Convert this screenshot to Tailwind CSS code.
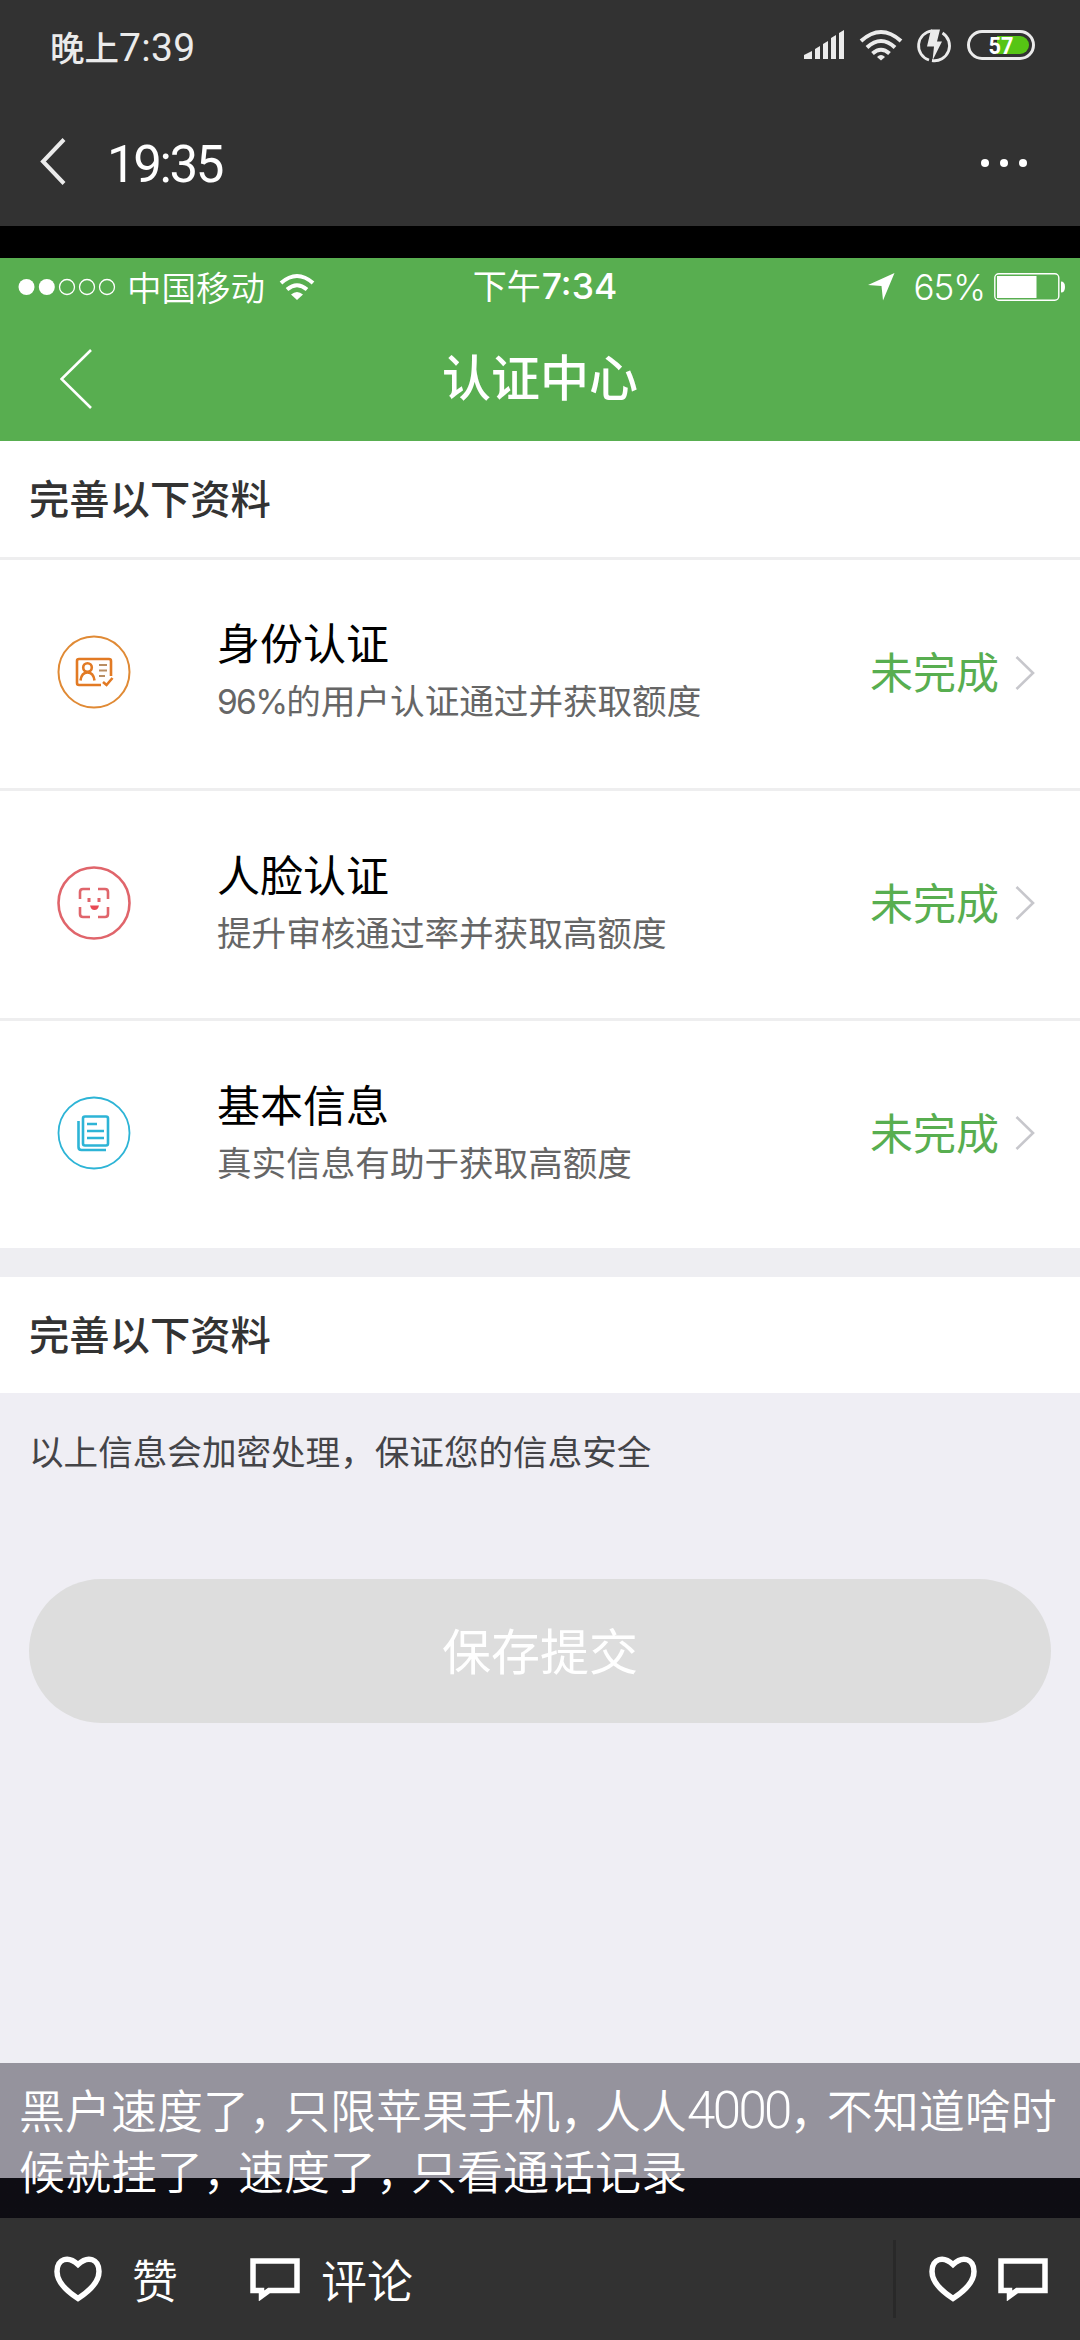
<!DOCTYPE html>
<html lang="zh-CN">
<head>
<meta charset="utf-8">
<title>认证中心</title>
<script src="https://cdn.jsdelivr.net/npm/@tailwindcss/browser@4"></script>
</head>
<body class="w-[1080px] h-[2340px] overflow-hidden bg-black flex flex-col font-['Noto_Sans_CJK_SC',sans-serif]">

<!-- phone status bar -->
<div class="h-[94px] shrink-0 bg-[#323232] flex items-start pl-[50px] pr-[45px] text-[#ebebeb]">
  <div class="flex items-baseline h-[94px] pt-[22px] whitespace-nowrap leading-[48px]"><span class="text-[34.500px] font-medium">晚上</span><span class="font-[Roboto] text-[39px] tracking-[0.300px]">7:39</span></div>
  <div class="ml-auto mt-[29px] flex">
    <svg class="w-[231px] h-[34px]" viewBox="804 29 231 34" fill="#ebebeb">
      <path d="M804 59v-4l8-4v8h-8zM815 59V49l5-3v13zM823 59V44l5-3v18zM831 59V38l5-3v24zM839 59V33l5-3v29z"/>
      <g fill="none" stroke="#ebebeb" stroke-width="4"><path d="M861 41Q881 23 901 41M867 47.500Q881 34.500 895 47.500M872.500 53.500Q881 46 889.500 53.500"/></g>
      <path d="M877 57q4-4 8 0l-4 3.500z"/>
      <path d="M932 30.800A15 15 0 0 0 929 60M942.500 33A15 15 0 0 1 932 60.500" fill="none" stroke="#ebebeb" stroke-width="2.800"/>
      <path d="M931 29.500h9l-3 12h5L932.500 60.500l1.500-14h-7z"/>
      <rect x="968.500" y="31.500" width="65" height="27" rx="13.500" fill="none" stroke="#ebebeb" stroke-width="3"/>
      <path d="M997 36h23a9 9 0 0 1 0 18h-23z" fill="#56c514"/>
      <text x="1001" y="54" text-anchor="middle" font-family="Roboto" font-weight="700" font-size="24" textLength="25" lengthAdjust="spacingAndGlyphs" fill="#fff">57</text>
    </svg>
  </div>
</div>

<!-- viewer toolbar -->
<div class="h-[132px] shrink-0 bg-[#323232] flex pl-[40px] pr-[53px] text-white">
  <svg class="w-[26px] h-[48px] mt-[43px]" viewBox="0 0 26 48" fill="none" stroke="#ebebeb" stroke-width="4"><path d="M24 2.500L3 24.500 24 46.500"/></svg>
  <div class="ml-[41px] mt-[41px] font-[Roboto] text-[51px] leading-[60px] tracking-[-2.400px]">19:35</div>
  <div class="ml-auto mt-[65px] flex gap-[11px]"><i class="size-2 rounded-full bg-white"></i><i class="size-2 rounded-full bg-white"></i><i class="size-2 rounded-full bg-white"></i></div>
</div>

<div class="h-8 shrink-0 bg-black"></div>

<!-- green header -->
<div class="h-[183px] shrink-0 bg-[#58ae50] text-white">
  <div class="h-[58px] grid grid-cols-3 items-center pl-[18px] pr-[14px]">
    <div class="flex items-center whitespace-nowrap">
      <svg class="w-[98px] h-[18px]" viewBox="0 0 98 18" fill="#fff"><circle cx="8.500" cy="9" r="8"/><circle cx="28.800" cy="9" r="8"/><g fill="none" stroke="#fff" stroke-width="1.300"><circle cx="49" cy="9" r="7.500"/><circle cx="69" cy="9" r="7.500"/><circle cx="89" cy="9" r="7.500"/></g></svg>
      <span class="ml-[11px] text-[34.500px] leading-[48px] pb-[3px] font-[350]">中国移动</span>
      <svg class="ml-[14px] w-[36px] h-[28px]" viewBox="0 0 36 28" fill="none" stroke="#fff" stroke-width="4"><path d="M2 10Q18-4 34 10M8 16.500Q18 8 28 16.500"/><path d="M12 21.500q6-5 12 0L18 27z" fill="#fff" stroke="none"/></svg>
    </div>
    <div class="flex justify-center items-baseline whitespace-nowrap leading-[48px] pl-[6px] pb-[2px]"><span class="text-[34px]">下午</span><span class="ml-[1px] font-[Inter] font-medium text-[35.500px]">7:34</span></div>
    <div class="flex items-center justify-end">
      <svg class="w-[27px] h-[28px]" viewBox="0 0 27 28" fill="#fff"><path d="M26.500 0L15 27.500 13.500 13 0 12z"/></svg>
      <span class="ml-[18px] font-[Inter] font-light text-[35px] leading-[48px] tracking-[-1px]">65%</span>
      <svg class="ml-[9px] w-[72px] h-[28px]" viewBox="0 0 72 28"><rect x=".8" y=".8" width="64" height="26.400" rx="4" fill="none" stroke="#fff" stroke-width="1.400"/><path d="M3 3h39.500v22H3z" fill="#fff"/><path d="M67 8.500q4 0 4 5.500t-4 5.500z" fill="#fff"/></svg>
    </div>
  </div>
  <div class="h-[125px] grid grid-cols-3 pl-[60px] pr-[60px]">
    <svg class="w-[32px] h-[60px] mt-[33px]" viewBox="0 0 32 60" fill="none" stroke="#fff" stroke-width="2.600"><path d="M31 1L1.500 30 31 59"/></svg>
    <div class="text-center text-[49px] font-medium leading-[70px] mt-[24px] whitespace-nowrap">认证中心</div>
  </div>
</div>

<div class="h-[116px] shrink-0 bg-white pl-[29px] text-[40.300px] leading-[112px] text-[#333] font-medium">完善以下资料</div>
<div class="h-[3px] shrink-0 bg-[#eeeeef]"></div>

<!-- identity -->
<div class="h-[228px] shrink-0 bg-white flex items-center pl-[57px] pr-[45px]">
  <svg class="size-[74px] -mt-[4px]" viewBox="0 0 74 74" fill="none" stroke="#e08a35" stroke-width="2"><circle cx="37" cy="37" r="35.500"/><g stroke="#e27a24" stroke-width="2.600"><path d="M44 50H22a2 2 0 0 1-2-2V26a2 2 0 0 1 2-2h30a2 2 0 0 1 2 2v15"/><circle cx="30.500" cy="32.500" r="4.300"/><path d="M23.500 45.500q1-8 7-8t7 8M46 47l3.500 3 6-7"/></g><path d="M42 30h8M42 35.500h8M42 41h6" stroke="#b98e63"/></svg>
  <div class="ml-[86px] mt-[-8px] flex flex-col whitespace-nowrap">
    <div class="text-[43px] leading-[60px] text-black">身份认证</div>
    <div class="text-[34.600px] leading-[56px] text-[#666]"><span class="font-[Inter] text-[33.500px] tracking-[-1.700px]">96%</span>的用户认证通过并获取额度</div>
  </div>
  <div class="ml-auto mt-[-8px] text-[43px] leading-[60px] text-[#58ae50]">未完成</div>
  <svg class="ml-[16px] -mt-[3px] w-[20px] h-[36px]" viewBox="0 0 20 36" fill="none" stroke="#c7c7cc" stroke-width="2.600"><path d="M1.500 2L18 18 1.500 34"/></svg>
</div>
<div class="h-[3px] shrink-0 bg-[#eeeeef]"></div>

<!-- face -->
<div class="h-[227px] shrink-0 bg-white flex items-center pl-[57px] pr-[45px]">
  <svg class="size-[74px] -mt-[4px]" viewBox="0 0 74 74" fill="none" stroke="#e0656b" stroke-width="2.600"><circle cx="37" cy="37" r="35.500"/><path d="M23 33v-7q0-3 3-3h7M41 23h7q3 0 3 3v7M51 41v7q0 3-3 3h-7M33 51h-7q-3 0-3-3v-7"/><path d="M33 39.500h9q-1 4.500-4.500 4.500T33 39.500z" fill="#e84a55" stroke="none"/><path d="M32 32v4M42 32v4" stroke-width="3"/></svg>
  <div class="ml-[86px] mt-[-8px] flex flex-col whitespace-nowrap">
    <div class="text-[43px] leading-[60px] text-black">人脸认证</div>
    <div class="text-[34.600px] leading-[56px] text-[#666]">提升审核通过率并获取高额度</div>
  </div>
  <div class="ml-auto mt-[-8px] text-[43px] leading-[60px] text-[#58ae50]">未完成</div>
  <svg class="ml-[16px] -mt-[3px] w-[20px] h-[36px]" viewBox="0 0 20 36" fill="none" stroke="#c7c7cc" stroke-width="2.600"><path d="M1.500 2L18 18 1.500 34"/></svg>
</div>
<div class="h-[3px] shrink-0 bg-[#eeeeef]"></div>

<!-- basic info -->
<div class="h-[227px] shrink-0 bg-white flex items-center pl-[57px] pr-[45px]">
  <svg class="size-[74px] -mt-[4px]" viewBox="0 0 74 74" fill="none" stroke="#2db4d6" stroke-width="2.600"><circle cx="37" cy="37" r="35.500" stroke-width="1.800"/><rect x="26" y="20.500" width="25" height="29" rx="2"/><path d="M21.500 25v26q0 3 3 3H49"/><path d="M30 28h10M30 35h17M30 42h17"/></svg>
  <div class="ml-[86px] mt-[-8px] flex flex-col whitespace-nowrap">
    <div class="text-[43px] leading-[60px] text-black">基本信息</div>
    <div class="text-[34.600px] leading-[56px] text-[#666]">真实信息有助于获取高额度</div>
  </div>
  <div class="ml-auto mt-[-8px] text-[43px] leading-[60px] text-[#58ae50]">未完成</div>
  <svg class="ml-[16px] -mt-[3px] w-[20px] h-[36px]" viewBox="0 0 20 36" fill="none" stroke="#c7c7cc" stroke-width="2.600"><path d="M1.500 2L18 18 1.500 34"/></svg>
</div>
<div class="h-[29px] shrink-0 bg-[#eeeef2]"></div>
<div class="h-[116px] shrink-0 bg-white pl-[29px] text-[40.300px] leading-[112px] text-[#333] font-medium">完善以下资料</div>

<div class="h-[670px] shrink-0 bg-[#efeef4] px-[29px]">
  <div class="pt-[31px] text-[34.600px] leading-[52px] text-[#444448] whitespace-nowrap">以上信息会加密处理，保证您的信息安全</div>
  <div class="mt-[103px] h-[144px] rounded-full bg-[#dddddd] text-white text-[49px] leading-[139px] text-center">保存提交</div>
</div>

<!-- caption over the picture's lower edge -->
<div class="h-[155px] shrink-0 bg-linear-to-b from-[#95939d] from-[115px] to-[#0e0d13] to-[115px] pl-[19px] pt-[15px] text-white text-[46px] leading-[61px] font-[350] whitespace-nowrap">
  <div class="h-[61px]">黑户速度了<span class="tracking-[-11px]">，</span>只限苹果手机<span class="tracking-[-11px]">，</span>人人<span class="font-[Roboto] font-light text-[51px] leading-[50px] tracking-[-2.600px]">4000</span><span class="tracking-[-9px]">，</span>不知道啥时</div>
  <div class="h-[61px]">候就挂了<span class="tracking-[-11px]">，</span>速度了<span class="tracking-[-11px]">，</span>只看通话记录</div>
</div>

<!-- actions -->
<div class="h-[122px] shrink-0 bg-[#323232] flex items-center text-white pl-[54px] pr-[32px] text-[46px] leading-[60px] font-[350]">
  <svg class="w-[48px] h-[46px]" viewBox="0 0 48 46" fill="none" stroke="#fff" stroke-width="5.500"><path d="M24 8.500C14-1 3 3 3 15.500 3 26 14 36 24 42.500 34 36 45 26 45 15.500 45 3 34-1 24 8.500z"/></svg>
  <span class="ml-[30px] -mt-[3px]">赞</span>
  <svg class="ml-[72px] w-[50px] h-[43px]" viewBox="0 0 50 43" fill="none" stroke="#fff" stroke-width="5.500"><path d="M3 3h44v29.500H19L11.500 38v-5.500H3z"/></svg>
  <span class="ml-[21px] -mt-[3px]">评论</span>
  <div class="ml-auto w-[3px] h-[78px] bg-[#292929]"></div>
  <svg class="ml-[33px] w-[48px] h-[46px]" viewBox="0 0 48 46" fill="none" stroke="#fff" stroke-width="5.500"><path d="M24 8.500C14-1 3 3 3 15.500 3 26 14 36 24 42.500 34 36 45 26 45 15.500 45 3 34-1 24 8.500z"/></svg>
  <svg class="ml-[21px] w-[50px] h-[43px]" viewBox="0 0 50 43" fill="none" stroke="#fff" stroke-width="5.500"><path d="M3 3h44v29.500H19L11.500 38v-5.500H3z"/></svg>
</div>
</body>
</html>
